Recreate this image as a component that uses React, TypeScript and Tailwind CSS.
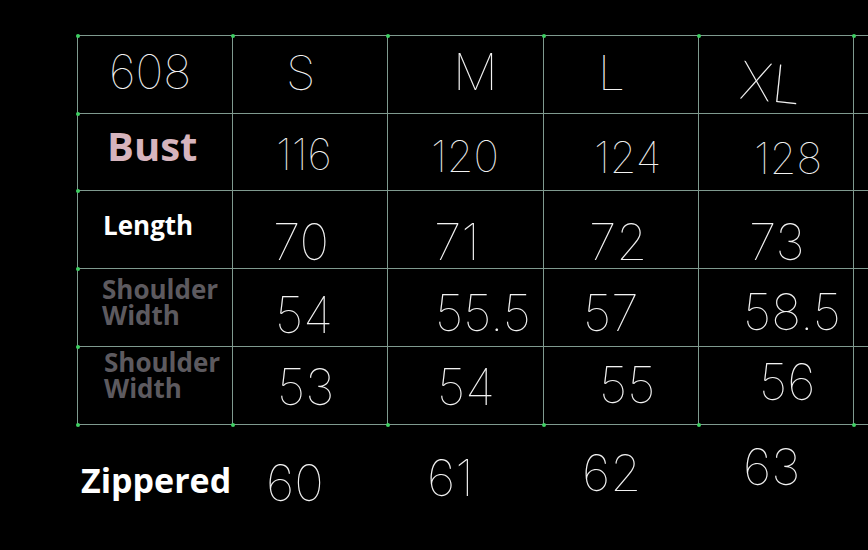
import React from 'react'

type Cell = { text: string; cls: string }

const thin = "font-['Inter','DejaVu_Sans',sans-serif] font-thin text-[#f2f2f2] leading-none whitespace-nowrap"
const label = "font-['Open_Sans','Noto_Sans',sans-serif] font-bold leading-none whitespace-nowrap"

// column widths so the lines land on 77 / 232 / 387 / 543 / 698 / 853
const colW = ['w-[156px]', 'w-[155px]', 'w-[156px]', 'w-[155px]', 'w-[155px]']

// each row: label cell + 4 size cells (padding = where the sticker text sits)
const rows: { h: string; cells: Cell[] }[] = [
  {
    h: 'h-[78px]',
    cells: [
      { text: '608', cls: `${thin} text-[47px] pl-[31px] pt-[12px]` },
      { text: 'S', cls: `${thin} text-[48px] pl-[53px] pt-[13px]` },
      { text: 'M', cls: `${thin} text-[50px] pl-[65px] pt-[11px]` },
      { text: 'L', cls: `${thin} text-[48px] pl-[54px] pt-[13px]` },
      { text: 'XL', cls: `${thin} text-[52px] pl-[42px] pt-[14px] rotate-[6deg] origin-left` },
    ],
  },
  {
    h: 'h-[77px]',
    cells: [
      { text: 'Bust', cls: `${label} text-[40px] text-[#d6b4bd] pl-[29px] pt-[12px]` },
      { text: '116', cls: `${thin} text-[43px] pl-[43px] pt-[19px]` },
      { text: '120', cls: `${thin} text-[43px] pl-[43px] pt-[21px]` },
      { text: '124', cls: `${thin} text-[43px] pl-[50px] pt-[22px]` },
      { text: '128', cls: `${thin} text-[43px] pl-[55px] pt-[23px]` },
    ],
  },
  {
    h: 'h-[78px]',
    cells: [
      { text: 'Length', cls: `${label} text-[26px] text-white pl-[25px] pt-[21px]` },
      { text: '70', cls: `${thin} text-[50px] pl-[40px] pt-[26px]` },
      { text: '71', cls: `${thin} text-[50px] pl-[46px] pt-[26px]` },
      { text: '72', cls: `${thin} text-[50px] pl-[45px] pt-[26px]` },
      { text: '73', cls: `${thin} text-[50px] pl-[50px] pt-[26px]` },
    ],
  },
  {
    h: 'h-[78px]',
    cells: [
      { text: 'Shoulder\nWidth', cls: `${label} text-[26px] leading-[29px] text-[#5d5a5f] pl-[24px] pt-[7px] whitespace-pre` },
      { text: '54', cls: `${thin} text-[50px] pl-[42px] pt-[21px]` },
      { text: '55.5', cls: `${thin} text-[50px] pl-[47px] pt-[19px]` },
      { text: '57', cls: `${thin} text-[50px] pl-[39px] pt-[19px]` },
      { text: '58.5', cls: `${thin} text-[50px] pl-[44px] pt-[18px]` },
    ],
  },
  {
    h: 'h-[78px]',
    cells: [
      { text: 'Shoulder\nWidth', cls: `${label} text-[26px] leading-[29px] text-[#5d5a5f] pl-[26px] pt-[2px] whitespace-pre` },
      { text: '53', cls: `${thin} text-[50px] pl-[44px] pt-[15px]` },
      { text: '54', cls: `${thin} text-[50px] pl-[49px] pt-[15px]` },
      { text: '55', cls: `${thin} text-[50px] pl-[55px] pt-[13px]` },
      { text: '56', cls: `${thin} text-[50px] pl-[60px] pt-[10px]` },
    ],
  },
]

const zipper: Cell[] = [
  { text: 'Zippered', cls: `${label} text-[34px] text-white pl-[4px] pt-[38px]` },
  { text: '60', cls: `${thin} text-[50px] pl-[33px] pt-[33px]` },
  { text: '61', cls: `${thin} text-[50px] pl-[39px] pt-[28px]` },
  { text: '62', cls: `${thin} text-[50px] pl-[38px] pt-[23px]` },
  { text: '63', cls: `${thin} text-[50px] pl-[44px] pt-[17px]` },
]

const Dot = ({ pos }: { pos: string }) => (
  <span className={`absolute w-[4px] h-[4px] rounded-full bg-[#3ecf62] ${pos}`} />
)

export default function App() {
  return (
    <div className="w-[868px] h-[550px] bg-black overflow-hidden">
      <div className="pt-[35px] pl-[77px]">
        <div className="border-t border-[#7f9a8f] w-[791px]">
          {rows.map((row, ri) => (
            <div key={ri} className={`flex border-b border-[#7f9a8f] ${row.h}`}>
              {row.cells.map((c, ci) => (
                <div
                  key={ci}
                  className={`relative ${colW[ci]} shrink-0 border-r border-[#7f9a8f] ${ci === 0 ? 'border-l' : ''}`}
                >
                  {ci === 0 && <Dot pos="-left-[2.5px] -top-[2.5px]" />}
                  {ri === 0 && <Dot pos="-right-[2.5px] -top-[2.5px]" />}
                  {ci === 0 && ri === rows.length - 1 && <Dot pos="-left-[2.5px] -bottom-[2.5px]" />}
                  {ri === rows.length - 1 && <Dot pos="-right-[2.5px] -bottom-[2.5px]" />}
                  <div className={c.cls}>{c.text}</div>
                </div>
              ))}
              <div className="flex-1" />
            </div>
          ))}
        </div>
        <div className="flex">
          {zipper.map((c, i) => (
            <div key={i} className={`${colW[i]} shrink-0`}>
              <div className={c.cls}>{c.text}</div>
            </div>
          ))}
        </div>
      </div>
    </div>
  )
}
